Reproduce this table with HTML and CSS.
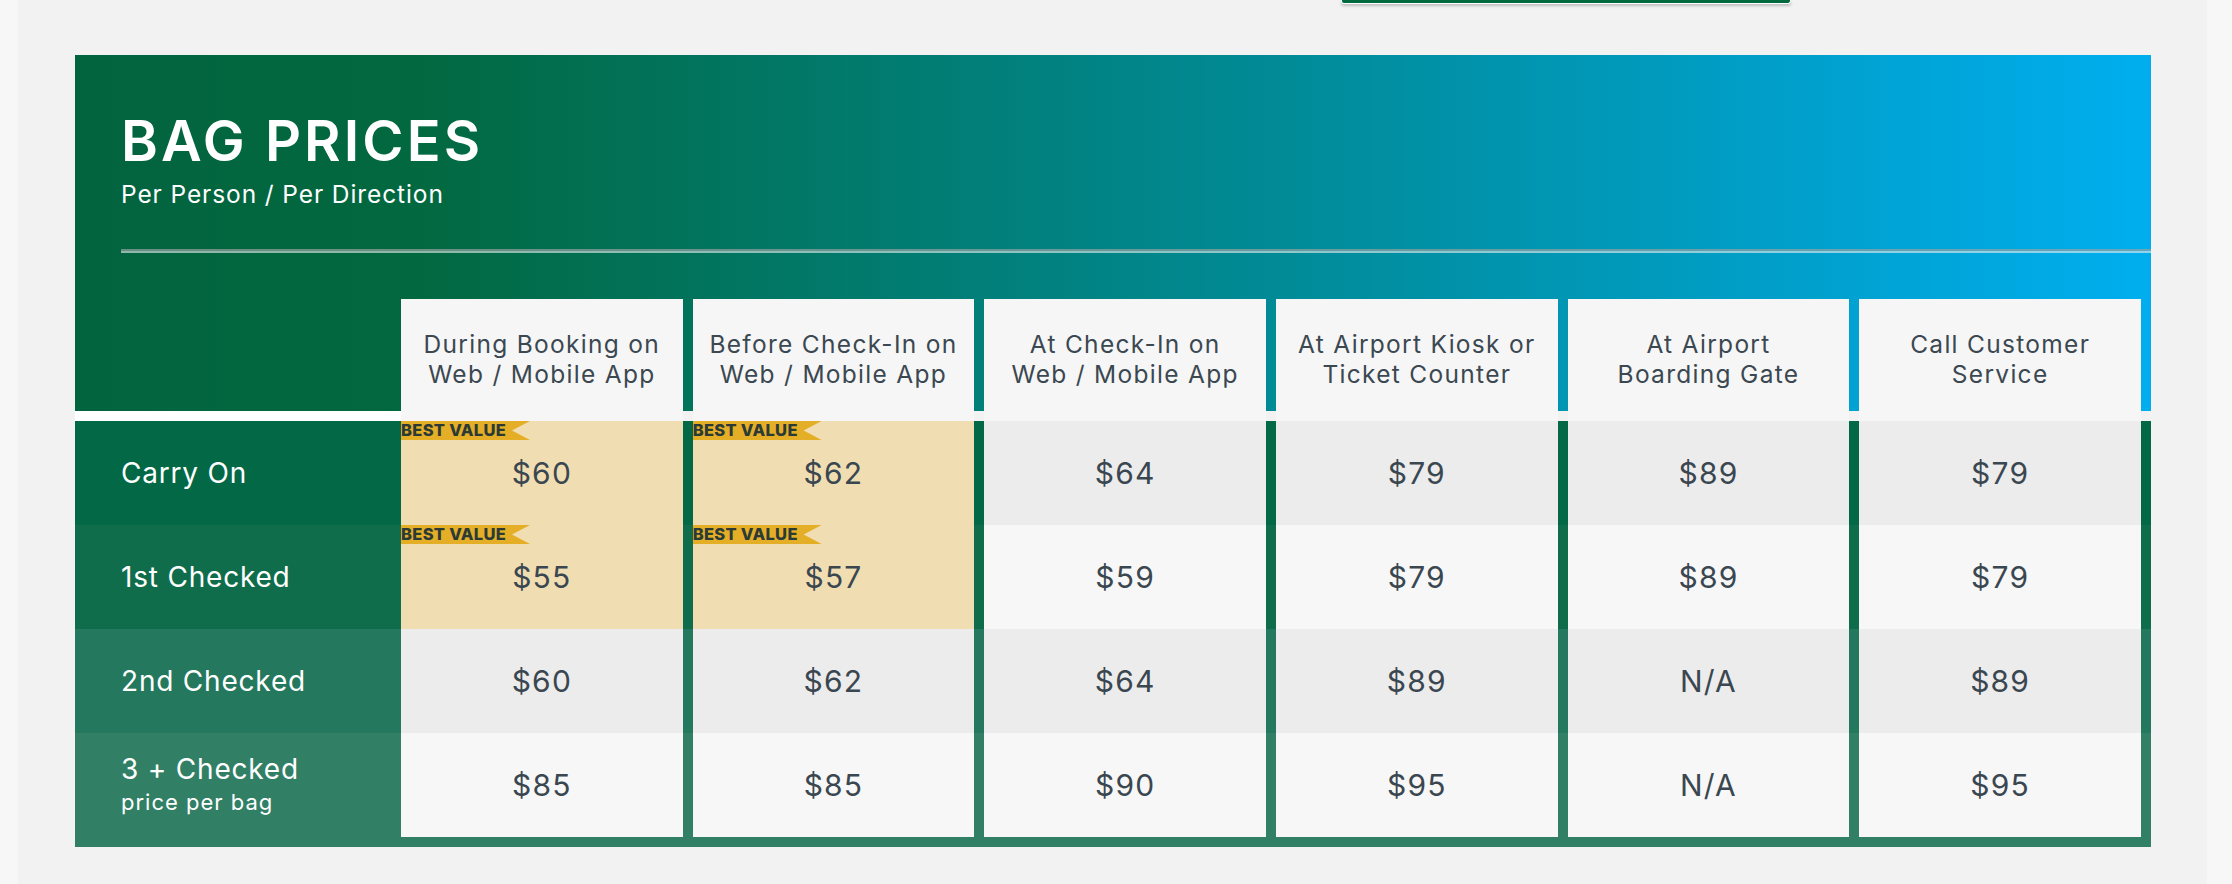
FILE: index.html
```html
<!DOCTYPE html>
<html lang="en">
<head>
<meta charset="utf-8">
<title>Bag Prices</title>
<link rel="stylesheet" href="styles.css">
</head>
<body>
<div class="page">
  <div class="topbar"><div class="tab-stub"></div></div>
  <section class="panel">
    <div class="top">
      <div class="intro">
        <h1 class="title">BAG PRICES</h1>
        <p class="subtitle">Per Person / Per Direction</p>
        <div class="divider"></div>
      </div>
      <div class="grid thead">
        <div class="hcell-empty"></div>
        <div class="hcell">During Booking on<br>Web / Mobile App</div>
        <div class="hcell">Before Check-In on<br>Web / Mobile App</div>
        <div class="hcell">At Check-In on<br>Web / Mobile App</div>
        <div class="hcell">At Airport Kiosk or<br>Ticket Counter</div>
        <div class="hcell">At Airport<br>Boarding Gate</div>
        <div class="hcell">Call Customer<br>Service</div>
      </div>
    </div>
    <div class="grid row r1">
      <div class="label">Carry On</div>
      <div class="cell best"><span class="badge">BEST VALUE</span>$60</div>
      <div class="cell best"><span class="badge">BEST VALUE</span>$62</div>
      <div class="cell gray">$64</div>
      <div class="cell gray">$79</div>
      <div class="cell gray">$89</div>
      <div class="cell gray">$79</div>
    </div>
    <div class="grid row r2">
      <div class="label">1st Checked</div>
      <div class="cell best"><span class="badge">BEST VALUE</span>$55</div>
      <div class="cell best"><span class="badge">BEST VALUE</span>$57</div>
      <div class="cell light">$59</div>
      <div class="cell light">$79</div>
      <div class="cell light">$89</div>
      <div class="cell light">$79</div>
    </div>
    <div class="grid row r3">
      <div class="label">2nd Checked</div>
      <div class="cell gray">$60</div>
      <div class="cell gray">$62</div>
      <div class="cell gray">$64</div>
      <div class="cell gray">$89</div>
      <div class="cell gray">N/A</div>
      <div class="cell gray">$89</div>
    </div>
    <div class="grid row r4">
      <div class="label">3 + Checked<span class="sub">price per bag</span></div>
      <div class="cell light">$85</div>
      <div class="cell light">$85</div>
      <div class="cell light">$90</div>
      <div class="cell light">$95</div>
      <div class="cell light">N/A</div>
      <div class="cell light">$95</div>
    </div>
  </section>
</div>
</body>
</html>
```

FILE: styles.css
```css
* { box-sizing: border-box; }

html, body {
  margin: 0;
  padding: 0;
  background: #f7f7f7;
  font-family: Inter, "Noto Sans", sans-serif;
}

.page {
  width: 2189px;
  margin-left: 18px;
  min-height: 884px;
  background: #f2f2f2;
  padding: 0 56px 37px 57px;
}

.topbar {
  height: 55px;
}

.tab-stub {
  margin-left: 1266px;
  width: 450px;
  height: 4px;
  background: #02693f;
  border: 1px solid #ffffff;
  border-top: none;
  border-radius: 0 0 3px 3px;
  box-shadow: 0 2px 3px rgba(0, 0, 0, 0.22);
}

.panel {
  width: 2076px;
}

.top {
  background-color: #f2f2f2;
  background-image: linear-gradient(90deg, #02643f 0%, #02683f 16%, #00aeef 100%);
  background-size: 100% calc(100% - 10px);
  background-repeat: no-repeat;
  padding-top: 58px;
}

.intro {
  padding-left: 46px;
}

.title {
  margin: 0;
  color: #ffffff;
  font-size: 56px;
  line-height: 56px;
  font-weight: 600;
  letter-spacing: 3.1px;
}

.subtitle {
  margin: 10px 0 0;
  color: #ffffff;
  font-size: 24.5px;
  line-height: 30px;
  font-weight: 400;
  letter-spacing: 0.9px;
}

.divider {
  margin-top: 40px;
  height: 4px;
  border-top: 2px solid rgba(150, 160, 160, 0.7);
  border-bottom: 2px solid rgba(235, 240, 240, 0.6);
}

.grid {
  display: grid;
  grid-template-columns: 316px repeat(6, 1fr);
  column-gap: 10px;
  padding-right: 10px;
}

.thead {
  margin-top: 46px;
}

.hcell-empty {
  height: 122px;
  margin-right: -10px;
  border-bottom: 10px solid #ffffff;
}

.hcell {
  height: 122px;
  background: #f6f6f6;
  padding-top: 30px;
  text-align: center;
  color: #3b4851;
  font-size: 24.5px;
  line-height: 30px;
  letter-spacing: 1.3px;
}

.row {
  height: 104px;
}

.r1 { background: #026845; }
.r2 { background: #0f6d4b; }
.r3 { background: #24785d; }
.r4 { background: #318066; height: 114px; padding-bottom: 10px; }

.label {
  display: flex;
  flex-direction: column;
  justify-content: center;
  padding-left: 46px;
  color: #ffffff;
  font-size: 28px;
  line-height: 34px;
  letter-spacing: 0.8px;
}

.label .sub {
  font-size: 22px;
  line-height: 32px;
  letter-spacing: 1px;
}

.cell {
  position: relative;
  display: flex;
  align-items: center;
  justify-content: center;
  color: #3a4750;
  font-size: 30px;
  letter-spacing: 1.2px;
}

.gray { background: #ececec; }
.light { background: #f7f7f7; }
.best { background: #f0deb2; }

.badge {
  position: absolute;
  left: 0;
  top: 0;
  width: 129px;
  height: 19px;
  background: #e5ae27;
  clip-path: polygon(0 0, 100% 0, calc(100% - 18px) 50%, 100% 100%, 0 100%);
  color: #2c3a36;
  font-size: 16.5px;
  line-height: 19px;
  font-weight: 800;
  letter-spacing: 0.3px;
}
```
